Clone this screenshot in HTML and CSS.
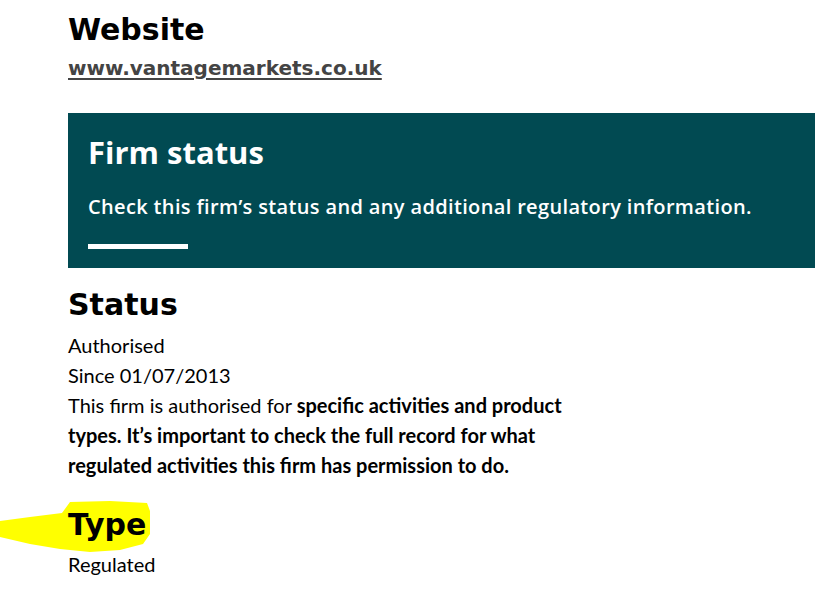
FILE: index.html
```html
<!DOCTYPE html>
<html lang="en">
<head>
  <meta charset="UTF-8" />
  <meta name="viewport" content="width=device-width, initial-scale=1.0"/>
  <title>Firm details</title>
  <link rel="stylesheet" href="styles.css">
</head>
<body>
  <div class="page">
    <!-- Website -->
    <section class="block">
      <h2 class="heading">Website</h2>
      <a class="site-link" href="#">www.vantagemarkets.co.uk</a>
    </section>

    <!-- Firm status banner -->
    <div class="banner">
      <h3>Firm status</h3>
      <p>Check this firm’s status and any additional regulatory information.</p>
      <span class="banner-rule"></span>
    </div>

    <!-- Status -->
    <section class="block status">
      <h2 class="heading">Status</h2>
      <div class="text">Authorised</div>
      <div class="text">Since 01/07/2013</div>
      <p class="text note">This firm is authorised for <strong>specific activities and product types. It’s important to check the full record for what regulated activities this firm has permission to do.</strong></p>
    </section>

    <!-- Type -->
    <section class="block type">
      <svg class="marker" viewBox="0 0 152 56" aria-hidden="true">
        <path d="M0,20 L30,16 L62,12 L70,1 L110,0 L147,2 L150,10 L150,33 L143,43 L120,49 L90,51 L60,48 L30,43 L0,36 Z" fill="#ffff00"/>
      </svg>
      <h2 class="heading">Type</h2>
      <div class="text">Regulated</div>
    </section>
  </div>
</body>
</html>
```

FILE: styles.css
```css
* {
  box-sizing: border-box;
}

body {
  margin: 0;
  padding: 0;
  background: #fff;
  color: #000;
  font-family: Lato, 'Open Sans', sans-serif;
  overflow: hidden;
}

.page {
  padding: 12px 0 0 68px;
}

.heading {
  margin: 0;
  font-family: 'DejaVu Sans', Verdana, sans-serif;
  font-weight: bold;
  font-size: 30px;
  line-height: 36px;
  color: #000;
}

.site-link {
  display: block;
  margin-top: 8px;
  font-family: 'DejaVu Sans', Verdana, sans-serif;
  font-weight: bold;
  font-size: 20px;
  line-height: 24px;
  color: #444;
  text-decoration: underline;
  text-underline-offset: 3px;
}

.banner {
  margin-top: 33px;
  background: #014a52;
  color: #fff;
  padding: 21px 20px 19px;
  font-family: 'Open Sans', sans-serif;
}

.banner h3 {
  margin: 0;
  font-size: 31px;
  line-height: 36px;
  font-weight: 700;
}

.banner p {
  margin: 23px 0 0;
  font-size: 20px;
  line-height: 28px;
  font-weight: 600;
  letter-spacing: 0.35px;
}

.banner-rule {
  display: block;
  width: 100px;
  height: 5px;
  margin-top: 23px;
  background: #fff;
}

.status {
  margin-top: 19px;
}

.status .heading {
  margin-bottom: 7px;
}

.text {
  font-size: 20px;
  line-height: 30px;
  color: #000;
}

.note {
  margin: 0;
  max-width: 520px;
}

.note strong {
  font-weight: bold;
}

.type {
  position: relative;
  margin-top: 27px;
}

.type .heading {
  position: relative;
  margin-bottom: 6px;
}

.marker {
  position: absolute;
  left: -68px;
  top: -6px;
  width: 152px;
  height: 56px;
}
```
